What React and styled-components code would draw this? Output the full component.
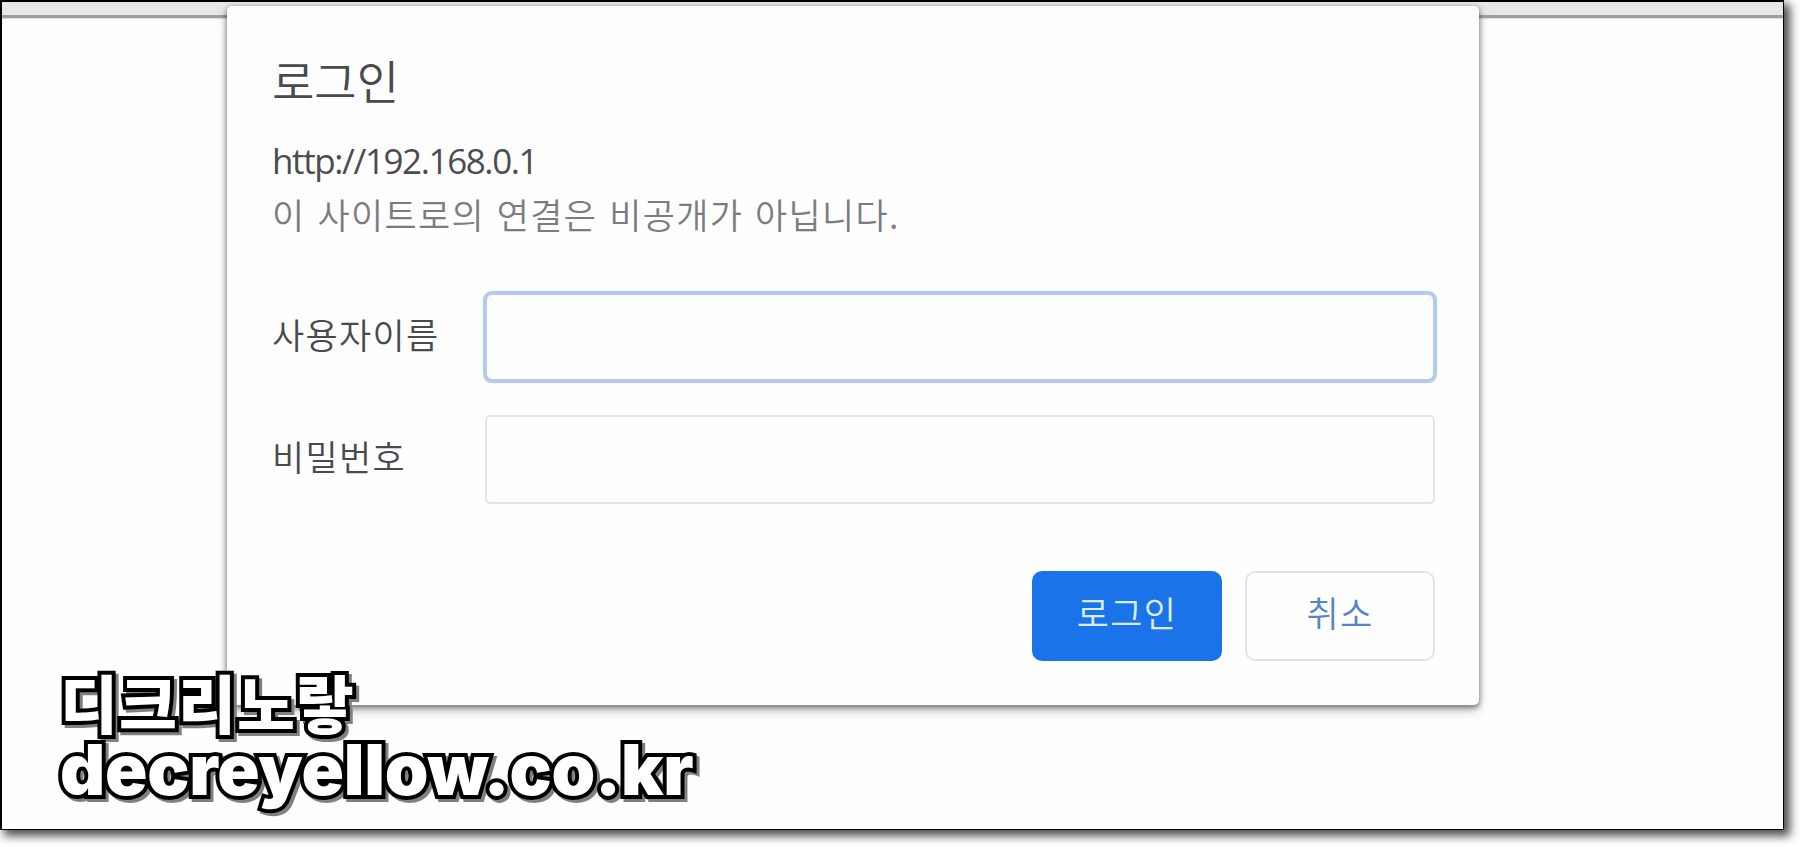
import React from 'react'
import styled, { createGlobalStyle } from 'styled-components'

const GlobalStyle = createGlobalStyle`
  * {
    box-sizing: border-box;
  }
  body {
    margin: 0;
    background: #fff;
    font-family: 'Noto Sans CJK KR', sans-serif;
  }
`

const fields = [
  { name: 'username', label: '사용자이름', type: 'text', focused: true },
  { name: 'password', label: '비밀번호', type: 'password', focused: false },
]

function App () {
  return (
    <Page>
      <GlobalStyle />
      <Frame>
        <Toolbar />
        <Dialog>
          <Title>로그인</Title>
          <Url>http://192.168.0.1</Url>
          <Notice>이 사이트로의 연결은 비공개가 아닙니다.</Notice>
          <Form>
            {fields.map(field => (
              <Field key={field.name}>
                <Label htmlFor={field.name}>{field.label}</Label>
                <Input id={field.name} type={field.type} $focused={field.focused} />
              </Field>
            ))}
          </Form>
          <Actions>
            <Button type='button' $primary>로그인</Button>
            <Button type='button'>취소</Button>
          </Actions>
        </Dialog>
        <Watermark>
          <BlogName>디크리노랗</BlogName>
          <BlogUrl>decreyellow.co.kr</BlogUrl>
        </Watermark>
      </Frame>
    </Page>
  )
}

export default App

const Page = styled.div`
  width: 1800px;
  height: 847px;
  overflow: hidden;
`

const Frame = styled.div`
  position: relative;
  width: 1784px;
  height: 830px;
  padding-top: 4px;
  border: 2px solid #000;
  border-right-width: 1px;
  border-bottom-width: 1px;
  background: #fefefe;
  box-shadow: 5px 5px 9px 1px rgba(0, 0, 0, .7);
`

const Toolbar = styled.div`
  position: absolute;
  top: 0;
  left: 0;
  right: 0;
  height: 16px;
  background: #e7e7e7;
  border-bottom: 3px solid #a0a0a0;
  box-shadow: 0 1px 1px rgba(0, 0, 0, .12);
`

const Dialog = styled.div`
  position: relative;
  width: 1252px;
  height: 699px;
  margin-left: 225px;
  padding: 45px 44px 0 45px;
  border-radius: 5px;
  background: #fefefe;
  box-shadow: 0 2px 5px 1px rgba(0, 0, 0, .4), 0 6px 12px rgba(0, 0, 0, .2);
`

const Title = styled.h1`
  margin: 0;
  height: 66px;
  line-height: 56px;
  font-size: 46px;
  font-weight: 350;
  color: #4a4a4e;
  white-space: nowrap;
`

const Url = styled.div`
  height: 54px;
  line-height: 87px;
  font-family: 'Open Sans', sans-serif;
  font-size: 35px;
  letter-spacing: -1.4px;
  color: #4c4c50;
  white-space: nowrap;
`

const Notice = styled.div`
  height: 56px;
  line-height: 86px;
  font-size: 35px;
  font-weight: 350;
  letter-spacing: 1.3px;
  word-spacing: 2.8px;
  color: #7c7c80;
  white-space: nowrap;
`

const Form = styled.div`
  display: grid;
  row-gap: 32px;
  padding-top: 65px;
`

const Field = styled.div`
  display: flex;
  align-items: center;
  height: 90px;
`

const Label = styled.label`
  width: 211px;
  padding-bottom: 8px;
  font-size: 35px;
  font-weight: 350;
  letter-spacing: 1.3px;
  color: #4a4a4e;
  white-space: nowrap;
`

const Input = styled.input`
  width: ${p => p.$focused ? 954 : 950}px;
  height: ${p => p.$focused ? 92 : 89}px;
  margin-left: ${p => p.$focused ? 0 : 2}px;
  padding: 0 16px;
  outline: none;
  border: ${p => p.$focused ? '4px solid #b5cae7' : '2px solid #e3e4e5'};
  border-radius: ${p => p.$focused ? 9 : 5}px;
  background: #fefefe;
  box-shadow: ${p => p.$focused ? '0 0 2px #d3e4fa' : 'none'};
  font-size: 32px;
`

const Actions = styled.div`
  display: flex;
  justify-content: flex-end;
  gap: 23px;
  padding-top: 67px;
`

const Button = styled.button`
  width: 190px;
  height: 90px;
  padding: 0 0 10px;
  border: 2px solid ${p => p.$primary ? '#1a73e8' : '#e2e4e8'};
  border-radius: 10px;
  background: ${p => p.$primary ? '#1a73e8' : '#fefefe'};
  color: ${p => p.$primary ? '#d8ecfd' : '#5584c9'};
  font-family: inherit;
  font-size: 35px;
  font-weight: 350;
  letter-spacing: 1.3px;
`

const Watermark = styled.div`
  position: absolute;
  left: 58px;
  top: 664px;
  color: #fff;
  font-weight: 900;
  white-space: nowrap;
  -webkit-text-stroke: 8px #000;
  paint-order: stroke fill;
  stroke-linejoin: round;
  filter: drop-shadow(3px 3px 0 #808080);
`

const BlogName = styled.div`
  height: 67px;
  line-height: 70px;
  font-size: 63px;
  letter-spacing: 1px;
`

const BlogUrl = styled.div`
  line-height: 74px;
  font-family: Inter, sans-serif;
  font-size: 70px;
  letter-spacing: -.2px;
`
